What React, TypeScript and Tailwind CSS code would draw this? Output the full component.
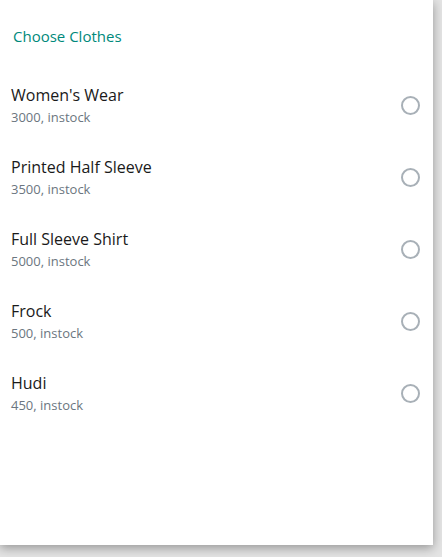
const items = [
  { name: "Women's Wear", price: 3000 },
  { name: 'Printed Half Sleeve', price: 3500 },
  { name: 'Full Sleeve Shirt', price: 5000 },
  { name: 'Frock', price: 500 },
  { name: 'Hudi', price: 450 },
]

export default function App() {
  return (
    <div className="w-[442px] h-[557px] bg-[#e4e4e4] overflow-hidden" style={{ fontFamily: '"Open Sans", "Noto Sans", sans-serif' }}>
      <div className="w-[433px] h-[545px] bg-white shadow-[0_3px_10px_rgba(0,0,0,0.35)] flex flex-col">
        <h2 className="pl-[13px] pt-[25px] text-[15px] leading-[22px] text-[#00897b]">Choose Clothes</h2>
        <ul className="mt-[34px] flex flex-col gap-[24px]">
          {items.map((item) => (
            <li key={item.name} className="flex items-center justify-between pl-[11px] pr-[13px] h-[48px]">
              <div className="flex flex-col">
                <span className="text-[16px] leading-[23px] text-[#1a1a1a]">{item.name}</span>
                <span className="text-[13px] leading-[20px] text-[#6b7680]">{item.price}, instock</span>
              </div>
              <span className="w-[19px] h-[19px] rounded-full border-2 border-[#a8b0b7]" />
            </li>
          ))}
        </ul>
      </div>
    </div>
  )
}
